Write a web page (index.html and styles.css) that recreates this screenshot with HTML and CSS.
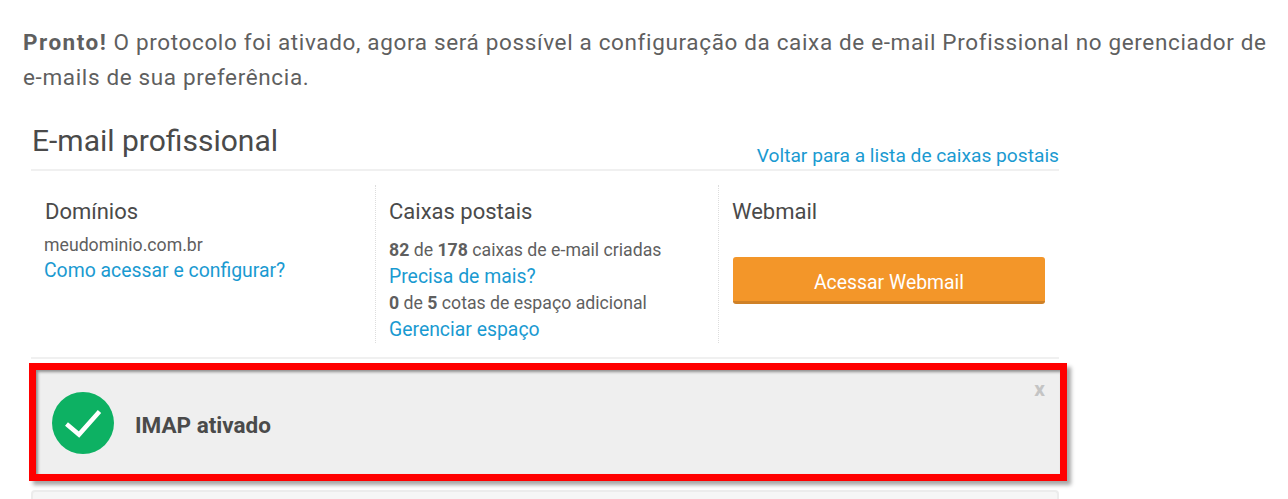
FILE: index.html
```html
<!DOCTYPE html>
<html lang="pt-BR">
<head>
  <meta charset="UTF-8" />
  <title>E-mail profissional</title>
  <link rel="stylesheet" href="styles.css">
</head>
<body>
  <p class="intro"><strong>Pronto!</strong> O protocolo foi ativado, agora será possível a configuração da caixa de e-mail Profissional no gerenciador de e-mails de sua preferência.</p>

  <main class="panel">
    <header class="panel-head">
      <h1>E-mail profissional</h1>
      <a href="#">Voltar para a lista de caixas postais</a>
    </header>

    <section class="columns">
      <div class="col col-domains">
        <h2>Domínios</h2>
        <div class="line">meudominio.com.br</div>
        <a href="#">Como acessar e configurar?</a>
      </div>
      <div class="col col-boxes">
        <h2>Caixas postais</h2>
        <div class="line"><b>82</b> de <b>178</b> caixas de e-mail criadas</div>
        <a href="#">Precisa de mais?</a>
        <div class="line"><b>0</b> de <b>5</b> cotas de espaço adicional</div>
        <a href="#">Gerenciar espaço</a>
      </div>
      <div class="col col-webmail">
        <h2>Webmail</h2>
        <button class="btn-webmail" type="button">Acessar Webmail</button>
      </div>
    </section>
  </main>

  <div class="alert">
    <svg class="alert-icon" viewBox="0 0 62 62" aria-hidden="true">
      <circle cx="31" cy="31" r="31" fill="#0db163"/>
      <path d="M14.5 32 L27 42.5 L47.5 19.5" fill="none" stroke="#fff" stroke-width="4.5"/>
    </svg>
    <span class="alert-text">IMAP ativado</span>
    <span class="alert-close">x</span>
  </div>

  <div class="next-box"></div>
</body>
</html>
```

FILE: styles.css
```css
/* Reset and base */
* {
  box-sizing: border-box;
  margin: 0;
  padding: 0;
}
html, body {
  height: 499px;
  overflow: hidden;
}
body {
  background: #fff;
  font-family: "Roboto", "Liberation Sans", sans-serif;
  color: #555;
  padding: 25px 0 0 23px;
}
a {
  color: #1a9ad1;
  text-decoration: none;
}

/* Intro paragraph */
.intro {
  width: 1250px;
  font-size: 22.5px;
  line-height: 35px;
  letter-spacing: 0.645px;
  color: #5f5f5f;
}
.intro strong {
  letter-spacing: 1.5px;
}

/* Panel */
.panel {
  width: 1028px;
  margin: 26px 0 0 8px;
  border-bottom: 2px solid #f0f0f0;
}
.panel-head {
  display: flex;
  justify-content: space-between;
  align-items: flex-end;
  height: 50px;
  border-bottom: 2px solid #f0f0f0;
}
.panel-head h1 {
  font-size: 30px;
  font-weight: 400;
  color: #4a4a4a;
  line-height: 38px;
  margin-bottom: 9px;
  margin-left: 1px;
}
.panel-head a {
  font-size: 19.2px;
  line-height: 24px;
  margin-bottom: 1px;
}

/* Columns */
.columns {
  display: grid;
  grid-template-columns: 345px 343px 1fr;
  margin: 14px 0;
  height: 158px;
}
.col {
  padding: 14px 0 0 13px;
  display: flex;
  flex-direction: column;
  align-items: flex-start;
  border-right: 1px dotted #ddd;
}
.col:last-child {
  border-right: none;
}
.col h2 {
  font-size: 22px;
  font-weight: 400;
  color: #4a4a4a;
  line-height: 26px;
  margin-bottom: 7px;
}
.col .line {
  font-size: 17.7px;
  line-height: 26px;
  color: #5f5f5f;
}
.col a {
  font-size: 19.4px;
  line-height: 26px;
}
.col b {
  font-weight: 700;
}
.col-domains h2 {
  margin-left: 1px;
}
.col-boxes h2 {
  margin-bottom: 12px;
}
.col-boxes .line,
.col-boxes a {
  line-height: 26.6px;
}
.btn-webmail {
  width: 312px;
  height: 47px;
  margin: 25px 0 0 1px;
  padding-top: 6px;
  background: #f39629;
  border: none;
  border-bottom: 3px solid #cf8127;
  border-radius: 3px;
  color: #fff;
  font-family: inherit;
  font-size: 19.4px;
}

/* Alert with the red highlight */
.alert {
  display: flex;
  align-items: center;
  gap: 21px;
  position: relative;
  width: 1038px;
  height: 118px;
  margin: 4px 0 0 6px;
  padding: 0 0 0 16px;
  background: #efefef;
  border: 7px solid #f00;
  box-shadow: 4px 4px 4px rgba(0, 0, 0, 0.35), inset 2px 2px 3px rgba(0, 0, 0, 0.4);
}
.alert-icon {
  width: 62px;
  height: 62px;
  margin-top: 1px;
}
.alert-text {
  margin-top: 5px;
  font-size: 22.5px;
  font-weight: 700;
  color: #4a4a4a;
}
.alert-close {
  position: absolute;
  top: 7px;
  right: 15px;
  font-size: 21px;
  font-weight: 700;
  color: #c4c4c4;
}

/* Box cut off at the bottom */
.next-box {
  width: 1028px;
  height: 10px;
  margin: 9px 0 0 8px;
  background: #f6f6f6;
  border: 2px solid #ececec;
  border-bottom: none;
  border-radius: 4px 4px 0 0;
}
```
